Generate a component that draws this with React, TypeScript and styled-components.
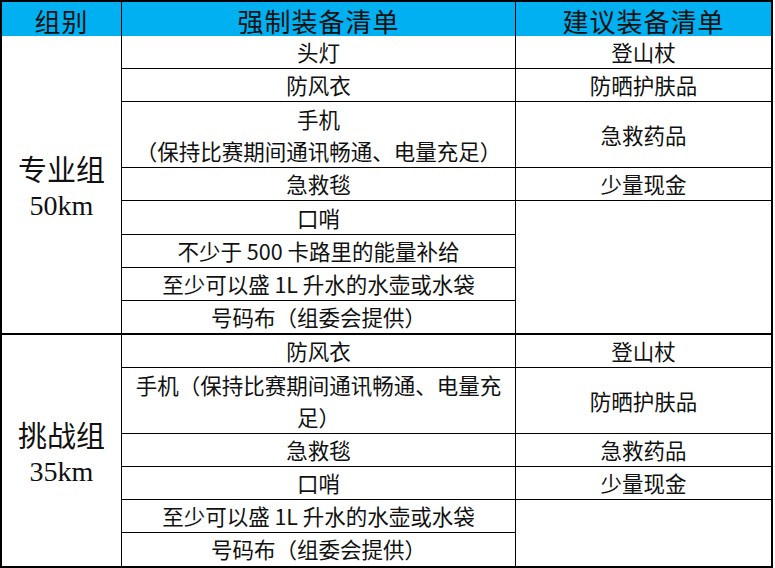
import React from "react";
import styled, { createGlobalStyle } from "styled-components";

const Global = createGlobalStyle`
  html, body { margin: 0; padding: 0; background: #ffffff; }
  body { font-family: "Noto Sans CJK SC", "Noto Sans", sans-serif; }
`;

const Table = styled.div`
  width: 773px;
  background: #000;
  padding: 2px;
  box-sizing: border-box;
  display: flex;
  flex-direction: column;
  gap: 2px;
`;

const Cols = `119px 393px 255px`;

const HeaderRow = styled.div`
  display: grid;
  grid-template-columns: ${Cols};
  column-gap: 1px;
  height: 32px;
`;

const HeaderCell = styled.div`
  background: #00b0f0;
  color: #111;
  display: flex;
  align-items: center;
  justify-content: center;
  font-family: "Noto Sans CJK SC", sans-serif;
  font-size: 26px;
  font-weight: 400;
  letter-spacing: 1px;
`;

const Section = styled.div<{ $rows: number }>`
  display: grid;
  grid-template-columns: ${Cols};
  grid-template-rows: repeat(${(p) => p.$rows}, 32.1px);
  grid-auto-flow: column;
  gap: 1px;
`;

const GroupCell = styled.div<{ $span: number }>`
  grid-row: span ${(p) => p.$span};
  background: #fff;
  display: flex;
  flex-direction: column;
  align-items: center;
  justify-content: center;
  color: #111;
  line-height: 37px;
  padding-top: 6px;
  box-sizing: border-box;
`;

const GroupName = styled.span`
  font-family: "Noto Sans CJK SC", sans-serif;
  font-size: 29px;
`;

const GroupDist = styled.span`
  font-family: "Liberation Serif", "Noto Sans CJK SC", serif;
  font-size: 28px;
`;

const Cell = styled.div<{ $span?: number }>`
  grid-row: span ${(p) => p.$span ?? 1};
  background: #fff;
  display: flex;
  align-items: center;
  justify-content: center;
  text-align: center;
  font-family: "Noto Sans CJK SC", sans-serif;
  font-size: 21.5px;
  line-height: 32px;
  color: #111;
  white-space: nowrap;
`;

type Item = { text: React.ReactNode; span?: number };

const sections: {
  name: string;
  dist: string;
  rows: number;
  required: Item[];
  suggested: Item[];
}[] = [
  {
    name: "专业组",
    dist: "50km",
    rows: 9,
    required: [
      { text: "头灯" },
      { text: "防风衣" },
      {
        text: (
          <>
            手机
            <br />
            （保持比赛期间通讯畅通、电量充足）
          </>
        ),
        span: 2,
      },
      { text: "急救毯" },
      { text: "口哨" },
      { text: "不少于 500 卡路里的能量补给" },
      { text: "至少可以盛 1L 升水的水壶或水袋" },
      { text: "号码布（组委会提供）" },
    ],
    suggested: [
      { text: "登山杖" },
      { text: "防晒护肤品" },
      { text: "急救药品", span: 2 },
      { text: "少量现金" },
      { text: "", span: 4 },
    ],
  },
  {
    name: "挑战组",
    dist: "35km",
    rows: 7,
    required: [
      { text: "防风衣" },
      {
        text: (
          <>
            手机（保持比赛期间通讯畅通、电量充
            <br />
            足）
          </>
        ),
        span: 2,
      },
      { text: "急救毯" },
      { text: "口哨" },
      { text: "至少可以盛 1L 升水的水壶或水袋" },
      { text: "号码布（组委会提供）" },
    ],
    suggested: [
      { text: "登山杖" },
      { text: "防晒护肤品", span: 2 },
      { text: "急救药品" },
      { text: "少量现金" },
      { text: "", span: 2 },
    ],
  },
];

export default function App() {
  return (
    <>
      <Global />
      <Table>
        <HeaderRow>
          <HeaderCell>组别</HeaderCell>
          <HeaderCell>强制装备清单</HeaderCell>
          <HeaderCell>建议装备清单</HeaderCell>
        </HeaderRow>
        {sections.map((s) => (
          <Section key={s.name} $rows={s.rows}>
            <GroupCell $span={s.rows}>
              <GroupName>{s.name}</GroupName>
              <GroupDist>{s.dist}</GroupDist>
            </GroupCell>
            {s.required.map((it, i) => (
              <Cell key={"r" + i} $span={it.span}>
                <span>{it.text}</span>
              </Cell>
            ))}
            {s.suggested.map((it, i) => (
              <Cell key={"s" + i} $span={it.span}>
                <span>{it.text}</span>
              </Cell>
            ))}
          </Section>
        ))}
      </Table>
    </>
  );
}
